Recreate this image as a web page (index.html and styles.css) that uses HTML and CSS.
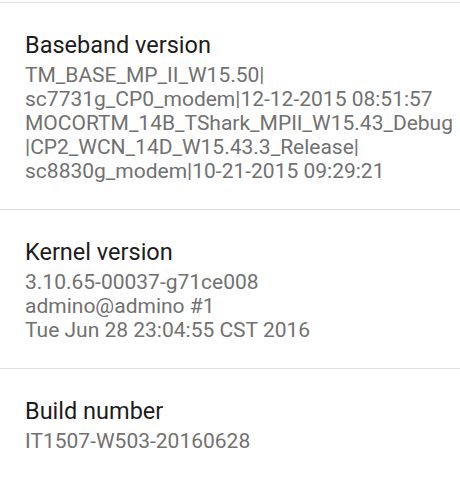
FILE: index.html
```html
<!DOCTYPE html>
<html lang="en">
<head>
    <meta charset="UTF-8">
    <meta name="viewport" content="width=device-width, initial-scale=1.0">
    <title>About phone</title>
    <link rel="stylesheet" href="styles.css">
</head>
<body>
    <div class="list">
        <div class="item">
            <div class="title">Baseband version</div>
            <div class="summary">
                TM_BASE_MP_II_W15.50|<br>
                sc7731g_CP0_modem|12-12-2015 08:51:57<br>
                MOCORTM_14B_TShark_MPII_W15.43_Debug<br>
                |CP2_WCN_14D_W15.43.3_Release|<br>
                sc8830g_modem|10-21-2015 09:29:21
            </div>
        </div>
        <div class="item">
            <div class="title">Kernel version</div>
            <div class="summary">
                3.10.65-00037-g71ce008<br>
                admino@admino #1<br>
                Tue Jun 28 23:04:55 CST 2016
            </div>
        </div>
        <div class="item">
            <div class="title">Build number</div>
            <div class="summary">IT1507-W503-20160628</div>
        </div>
    </div>
</body>
</html>
```

FILE: styles.css
```css
* {
    margin: 0;
    padding: 0;
    box-sizing: border-box;
}
body {
    background-color: #fff;
    font-family: Roboto, "Noto Sans", sans-serif;
    overflow: hidden;
}
.list {
    padding-top: 2px;
}
.item {
    border-top: 1px solid #dedede;
    padding: 28px 0 26px 25px;
}
.title {
    font-size: 23.5px;
    line-height: 28px;
    color: #1c1c1c;
    margin-bottom: 4px;
}
.summary {
    font-size: 21px;
    line-height: 24px;
    color: #717171;
    white-space: nowrap;
}
```
